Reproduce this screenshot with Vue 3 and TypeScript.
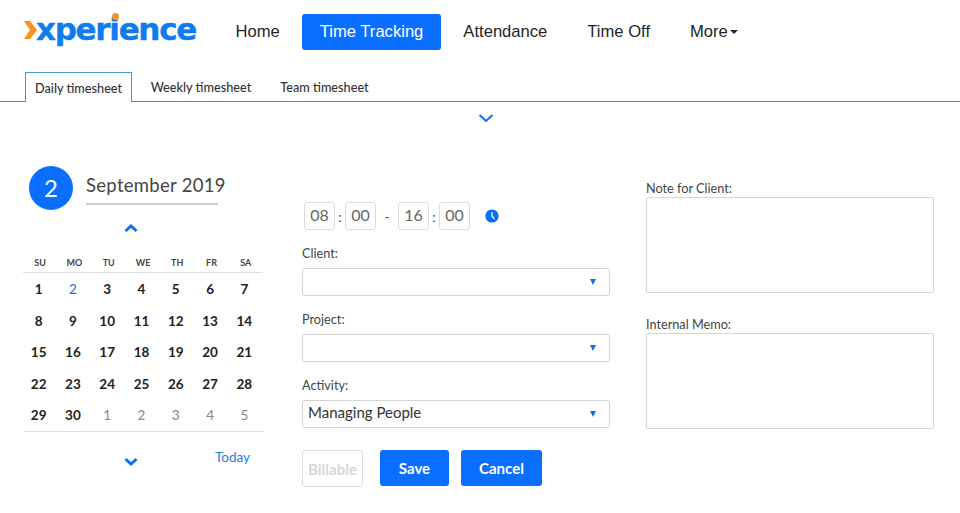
<script setup lang="ts">
const navItems = ['Home', 'Time Tracking', 'Attendance', 'Time Off']
const tabs = ['Daily timesheet', 'Weekly timesheet', 'Team timesheet']
const weekdays = ['SU', 'MO', 'TU', 'WE', 'TH', 'FR', 'SA']
const days: { n: number; muted?: boolean; today?: boolean }[] = []
for (let i = 1; i <= 30; i++) days.push({ n: i, today: i === 2 })
for (let i = 1; i <= 5; i++) days.push({ n: i, muted: true })
const fields = [
  { label: 'Client:', value: '' },
  { label: 'Project:', value: '' },
  { label: 'Activity:', value: 'Managing People' },
]
</script>

<template>
  <div class="page">
    <header class="topbar">
      <div class="logo">
        <svg class="logo-mark" width="14" height="20" viewBox="0 0 14 20">
          <path d="M0 1h6l7 9-7 9H0l6-9z" fill="#f7931e" />
        </svg>
        <span class="logo-text">xper<span class="logo-i">i<i class="logo-dot"></i></span>ence</span>
      </div>
      <nav class="nav">
        <a v-for="(item, i) in navItems" :key="item" class="nav-item" :class="{ active: i === 1 }">{{ item }}</a>
        <a class="nav-item more">More<span class="caret"></span></a>
      </nav>
    </header>

    <div class="tabs">
      <a v-for="(t, i) in tabs" :key="t" class="tab" :class="{ active: i === 0 }">{{ t }}</a>
    </div>

    <div class="collapse">
      <svg width="16" height="10" viewBox="0 0 16 10"><path d="M1.5 2 8 8l6.500-6" fill="none" stroke="#0a6ff0" stroke-width="2" /></svg>
    </div>

    <main class="content">
      <section class="calendar">
        <div class="cal-head">
          <div class="day-badge">2</div>
          <div class="month">September 2019</div>
        </div>
        <div class="arrow up">
          <svg width="14" height="10" viewBox="0 0 14 10"><path d="M1.500 8 7 3l5.500 5" fill="none" stroke="#0a6ff0" stroke-width="3" /></svg>
        </div>
        <div class="weekdays">
          <span v-for="w in weekdays" :key="w">{{ w }}</span>
        </div>
        <div class="days">
          <span v-for="(d, i) in days" :key="i" class="day" :class="{ muted: d.muted, today: d.today }">{{ d.n }}</span>
        </div>
        <div class="cal-foot">
          <svg class="down" width="14" height="10" viewBox="0 0 14 10"><path d="M1.500 2 7 7l5.500-5" fill="none" stroke="#0a6ff0" stroke-width="3" /></svg>
          <a class="today-link">Today</a>
        </div>
      </section>

      <section class="form">
        <div class="time-row">
          <span class="time-box">08</span><span class="sep colon">:</span><span class="time-box">00</span>
          <span class="sep dash">-</span>
          <span class="time-box">16</span><span class="sep colon">:</span><span class="time-box">00</span>
          <svg class="clock" width="14" height="14" viewBox="0 0 14 14">
            <circle cx="7" cy="7" r="6.600" fill="#0a6ff0" />
            <path d="M7 3v4l2.500 3" fill="none" stroke="#fff" stroke-width="1.200" />
          </svg>
        </div>
        <div v-for="f in fields" :key="f.label" class="field">
          <label class="label">{{ f.label }}</label>
          <div class="select">
            <span class="value">{{ f.value }}</span>
            <span class="tri"></span>
          </div>
        </div>
        <div class="actions">
          <button class="btn billable">Billable</button>
          <button class="btn save">Save</button>
          <button class="btn cancel">Cancel</button>
        </div>
      </section>

      <section class="notes">
        <label class="label">Note for Client:</label>
        <div class="note-box"></div>
        <label class="label second">Internal Memo:</label>
        <div class="note-box"></div>
      </section>
    </main>
  </div>
</template>

<style>
html, body { margin: 0; background: #fff; }
</style>

<style scoped>
.page {
  width: 960px;
  height: 513px;
  overflow: hidden;
  font-family: Lato, "Open Sans", sans-serif;
  color: #333;
  box-sizing: border-box;
}
.topbar {
  display: flex;
  align-items: flex-start;
  height: 72px;
  padding-left: 24px;
  box-sizing: border-box;
}
.logo {
  width: 193.500px;
  height: 50px;
  display: flex;
  align-items: center;
  margin-top: 4px;
  flex: none;
}
.logo-mark { flex: none; margin-top: 1px; margin-right: -2px; }
.logo-text {
  font-family: "DejaVu Sans", sans-serif;
  font-weight: 700;
  font-size: 31px;
  letter-spacing: -1.300px;
  color: #0f7bf0;
  line-height: 40px;
  -webkit-text-stroke: .4px #0f7bf0;
}
.logo-i { position: relative; color: #0f7bf0; }
.logo-dot {
  position: absolute;
  left: 3px;
  top: 2px;
  width: 7px;
  height: 7px;
  border-radius: 50%;
  background: #f7931e;
}
.nav {
  display: flex;
  align-items: center;
  gap: 4px;
  margin-top: 14px;
  font-family: "Liberation Sans", sans-serif;
}
.nav-item {
  font-size: 16.600px;
  line-height: 36px;
  padding: 0 18px;
  color: #212529;
  border-radius: 3px;
  white-space: nowrap;
}
.nav-item.active { background: #0a6fff; color: #fff; }
.nav-item.more { display: flex; align-items: center; }
.caret {
  width: 0;
  height: 0;
  margin-left: 2px;
  border-left: 4px solid transparent;
  border-right: 4px solid transparent;
  border-top: 4px solid #212529;
}
.tabs {
  display: flex;
  height: 29px;
  padding-left: 25px;
  border-bottom: 1px solid #4a95c9;
  font-size: 12.700px;
  font-weight: 500;
}
.tab {
  height: 29px;
  line-height: 30px;
  padding: 0 9px;
  color: #333;
  box-sizing: border-box;
  white-space: nowrap;
}
.tab:not(.active) { padding: 0 14.500px; }
.tab.active {
  height: 30px;
  background: #fff;
  border: 1px solid #4a95c9;
  border-bottom: 0;
  margin-right: 4px;
}
.collapse {
  display: flex;
  justify-content: center;
  padding: 11px 0 0 12px;
  height: 10px;
}
.content {
  display: flex;
  align-items: flex-start;
  padding: 43px 0 0 24px;
}
.calendar { width: 240px; flex: none; }
.cal-head { display: flex; align-items: flex-start; }
.day-badge {
  width: 44px;
  height: 44px;
  margin-left: 5px;
  border-radius: 50%;
  background: #0a6fff;
  color: #fff;
  font-size: 24px;
  line-height: 44px;
  text-align: center;
}
.month {
  width: 132px;
  margin-left: 13px;
  padding-top: 7px;
  height: 30px;
  border-bottom: 2px solid #cfcfcf;
  font-size: 18.500px;
  line-height: 24px;
  color: #444;
  white-space: nowrap;
  letter-spacing: .3px;
}
.arrow.up { display: flex; justify-content: center; padding-right: 26px; margin-top: 13px; height: 14px; }
.weekdays {
  display: grid;
  grid-template-columns: repeat(7, 1fr);
  margin-top: 15px;
  margin-left: -1px;
  width: 240px;
  height: 20px;
  border-bottom: 1px solid #ddd;
  font-size: 9px;
  font-weight: 700;
  line-height: 22px;
  text-align: center;
  color: #444;
}
.days {
  display: grid;
  grid-template-columns: repeat(7, 1fr);
  grid-auto-rows: 31.500px;
  border-bottom: 1px solid #ddd;
  height: 158px;
  font-size: 13.500px;
  font-weight: 700;
  text-align: center;
  color: #222;
  line-height: 33px;
}
.day { margin-left: -5px; }
.day.muted { color: #888; font-weight: 400; }
.day.today { color: #0a6fde; font-weight: 400; }
.cal-foot {
  display: flex;
  align-items: flex-start;
  margin-top: 20px;
  padding-left: 100px;
}
.down { margin-top: 5px; }
.today-link {
  margin-left: 77px;
  margin-top: -3px;
  font-size: 13.500px;
  color: #2a78e4;
}
.form { width: 308px; margin-left: 38px; flex: none; padding-top: 36px; }
.time-row { display: flex; align-items: center; padding-left: 2px; height: 28px; }
.time-box {
  width: 31px;
  height: 28px;
  border: 1px solid #dcdcdc;
  border-radius: 3px;
  box-sizing: border-box;
  text-align: center;
  line-height: 24px;
  font-size: 16px;
  color: #666;
}
.sep { color: #555; font-size: 14px; text-align: center; }
.colon { width: 10px; }
.dash { width: 22px; }
.clock { margin-left: 15px; }
.label {
  display: block;
  font-size: 12.700px;
  line-height: 16px;
  color: #444;
}
.field { padding-top: 15px; }
.select {
  height: 28px;
  margin-top: 7px;
  border: 1px solid #d4d4d4;
  border-radius: 3px;
  box-sizing: border-box;
  display: flex;
  align-items: center;
  justify-content: space-between;
  padding: 0 13px 0 5px;
  font-size: 15px;
  color: #333;
}
.value { padding-bottom: 5px; }
.tri {
  width: 0;
  height: 0;
  border-left: 3.500px solid transparent;
  border-right: 3.500px solid transparent;
  border-top: 6px solid #0a6ff0;
}
.actions { display: flex; margin-top: 22px; align-items: flex-start; }
.btn {
  font-family: inherit;
  font-size: 15px;
  font-weight: 700;
  height: 36px;
  border-radius: 3px;
  border: 0;
  background: #0a6fff;
  color: #fff;
  padding: 0;
}
.billable {
  width: 61px;
  height: 37px;
  background: #fff;
  border: 1px solid #dedede;
  color: #d6d6d6;
  margin-right: 17px;
}
.save { width: 69px; margin-right: 12px; }
.cancel { width: 81px; }
.notes { width: 288px; margin-left: 36px; flex: none; padding-top: 14px; }
.note-box {
  height: 96px;
  border: 1px solid #d4d4d4;
  border-radius: 2px;
  box-sizing: border-box;
  margin-top: 1px;
}
.second { margin-top: 23px; }
</style>
